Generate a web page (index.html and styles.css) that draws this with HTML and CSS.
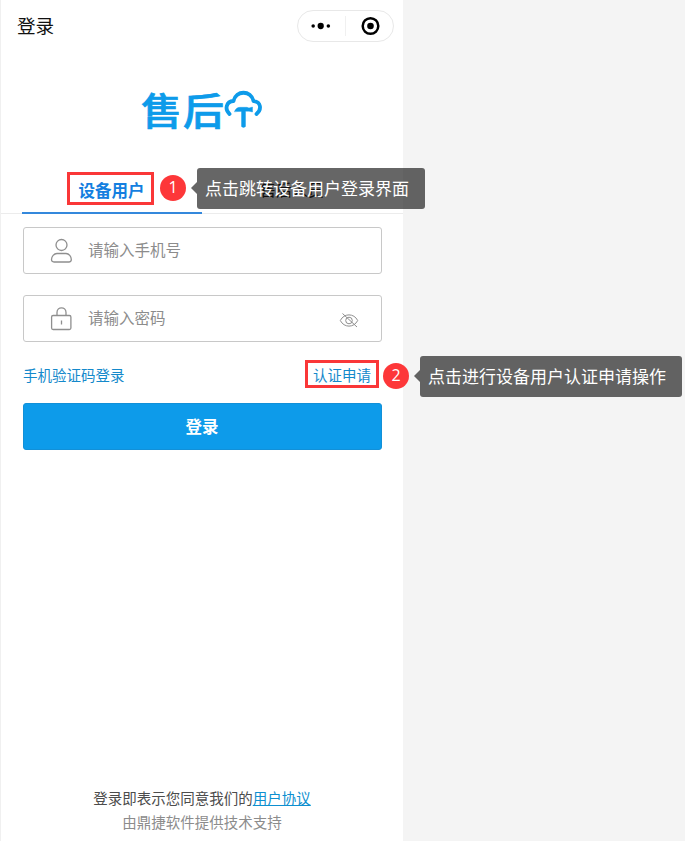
FILE: index.html
```
<!DOCTYPE html>
<html lang="zh-CN">
<head>
<meta charset="utf-8">
<title>登录</title>
<link rel="stylesheet" href="styles.css">
</head>
<body>
<main class="phone">
  <header class="navbar">
    <h1>登录</h1>
    <div class="capsule">
      <svg class="dots" viewBox="0 0 48 20"><circle cx="15.500" cy="10" r="1.800"/><circle cx="23.200" cy="10" r="3.200"/><circle cx="31" cy="10" r="1.800"/></svg>
      <svg class="target" viewBox="0 0 47 30"><circle class="ring" cx="24.500" cy="15" r="7.800"/><circle cx="24.500" cy="15" r="3.300"/></svg>
    </div>
  </header>

  <div class="logo">
    <span>售</span><span>后</span>
    <svg viewBox="0 0 40 40">
      <path d="M5.500 25 C.5 20.500 2 12.500 9.500 12 C12 1 27 1 29.500 12 C37 12.500 38 20.500 32.500 25"/>
      <path class="hammer" d="M10.500 22.500 C11.500 20 13 18.300 16 18.300 H23 L25 19 L28.500 18 V23 L25 22.200 H21.500 V37.500 Q19.500 39.500 17.500 37.500 V22.500 Z"/>
    </svg>
  </div>

  <nav class="tabs">
    <a class="tab active"><span>设备用户</span></a>
    <a class="tab"><span>售后人员</span></a>
    <div class="note note-user"><i class="badge">1</i><div class="tip">点击跳转设备用户登录界面</div></div>
  </nav>

  <form class="form">
    <div class="field">
      <svg class="icon" viewBox="0 0 24 26"><circle cx="12.500" cy="7" r="5.500"/><path d="M8 15.500 H17 C20 15.500 22.300 18.500 22.300 21.500 Q22.300 24 19.800 24 H5 Q2.500 24 2.500 21.500 C2.500 18.500 5 15.500 8 15.500 Z"/></svg>
      <span>请输入手机号</span>
    </div>
    <div class="field">
      <svg class="icon" viewBox="0 0 24 26"><rect x="2.600" y="9.500" width="19.300" height="14" rx="1.500"/><path d="M8 9.500 V6.500 C8 .2 17 .2 17 6.500 V9.500 M12.500 14.500 V18.500"/></svg>
      <span>请输入密码</span>
      <svg class="eye" viewBox="0 0 20 18"><path d="M1.300 9.500 C5 2 15 2 18.700 9.500 C15 17 5 17 1.300 9.500 Z M3.500 2.500 L18 16"/><circle cx="10" cy="9.500" r="3.300"/></svg>
    </div>
    <div class="links">
      <a>手机验证码登录</a>
      <a class="apply">认证申请</a>
      <div class="note note-apply"><i class="badge">2</i><div class="tip">点击进行设备用户认证申请操作</div></div>
    </div>
    <button type="button">登录</button>
  </form>

  <footer>
    <p>登录即表示您同意我们的<a>用户协议</a></p>
    <p class="support">由鼎捷软件提供技术支持</p>
  </footer>
</main>
</body>
</html>
```
FILE: styles.css
```
* { box-sizing: border-box; }
body {
  margin: 0;
  height: 841px;
  overflow: hidden;
  background: #f4f4f4;
  font-family: "Noto Sans CJK SC", sans-serif;
}
.phone {
  width: 403px;
  height: 841px;
  border-left: 1px solid #f0f0f0;
  background: #fff;
  display: flex;
  flex-direction: column;
}
.navbar {
  height: 50px;
  padding: 0 9px 0 16px;
  display: flex;
  align-items: center;
  justify-content: space-between;
}
h1 { margin: 0; font-size: 18.600px; font-weight: 400; line-height: 28px; color: #111; }
.capsule {
  width: 97px;
  height: 32px;
  margin-top: 1px;
  border: 1px solid #e8e8e8;
  border-radius: 16px;
  display: flex;
}
.capsule svg { fill: #000; }
.capsule .dots { width: 48px; height: 20px; margin: 5px 0; border-right: 1px solid #f0f0f0; }
.capsule .target { width: 47px; height: 30px; }
.capsule .ring { fill: none; stroke: #000; stroke-width: 2.500; }

.logo {
  height: 44px;
  margin: 39px 0 0 140px;
  display: flex;
  color: #0d9bea;
}
.logo span {
  width: 43px;
  font-size: 41px;
  line-height: 42px;
  font-weight: 500;
  -webkit-text-stroke: .8px currentColor;
  stroke-linejoin: round;
  transform: scaleY(.92);
  transform-origin: 0 0;
}
.logo svg {
  width: 40px;
  height: 40px;
  margin: 0 0 0 -1px;
  fill: none;
  stroke: currentColor;
  stroke-width: 3.800;
  stroke-linecap: round;
  stroke-linejoin: round;
}
.logo .hammer { fill: currentColor; stroke-width: .4; }
.logo span + span { width: 42px; margin-left: -1px; }

.tabs {
  position: relative;
  height: 48px;
  margin-top: 33px;
  padding: 0 21px;
  display: flex;
  border-bottom: 1px solid #ececec;
}
.tab {
  width: 180px;
  height: 48px;
  padding-top: 6px;
  display: flex;
  justify-content: center;
  font-size: 16px;
  color: #222;
}
.tab span { height: 33px; line-height: 35px; }
.tab.active { border-bottom: 2px solid #3488dc; color: #147fe0; }
.active span {
  width: 87px;
  margin-left: -3px;
  padding-left: 2px;
  border: 3px solid #fa3738;
  font-size: 16.500px;
  font-weight: 700;
  line-height: 30px;
  text-align: center;
}

.note { position: absolute; display: flex; align-items: center; gap: 11px; }
.note-user { left: 159px; top: 2px; }
.note-apply { left: 360px; top: -4px; }
.badge {
  width: 26px;
  height: 26px;
  margin-top: -1px;
  border-radius: 50%;
  background: #fd3739;
  color: #fff;
  font: 16px/24px "Open Sans", sans-serif;
  text-align: center;
}
.tip {
  position: relative;
  height: 41px;
  padding: 0 16px 0 8px;
  border-radius: 3px;
  background: rgba(0, 0, 0, .6);
  color: #fff;
  font-size: 17px;
  line-height: 40px;
  white-space: nowrap;
}
.tip::before {
  content: "";
  position: absolute;
  left: -6px;
  top: 14px;
  border: 6px solid transparent;
  border-left: 0;
  border-right-color: rgba(0, 0, 0, .6);
}

.form { padding: 13px 22px 0; }
.field {
  width: 359px;
  height: 47px;
  margin-bottom: 21px;
  padding: 0 22px 0 25px;
  display: flex;
  align-items: center;
  border: 1px solid #c8c8c8;
  border-radius: 3px;
  color: #8c8c8c;
  font-size: 15.500px;
}
.field span { margin-top: -3px; }
.field svg { fill: none; stroke: #8f8f8f; }
.icon { width: 24px; height: 26px; margin-right: 15px; stroke-width: 1.300; }
.eye { width: 20px; height: 18px; margin: 3px 0 0 auto; stroke-width: 1; }
.links {
  position: relative;
  height: 28px;
  margin-top: -3px;
  display: flex;
  justify-content: space-between;
  color: #1489cb;
  font-size: 14.500px;
  line-height: 29px;
}
.apply {
  width: 74px;
  height: 28px;
  margin-right: 2px;
  border: 3px solid #fa3738;
  line-height: 23px;
  text-align: center;
}
button {
  display: block;
  width: 359px;
  height: 47px;
  margin-top: 15px;
  padding: 0 1px 0 0;
  border: 1px solid #1290d8;
  border-radius: 3px;
  background: #0d9bea;
  color: #fff;
  font: 700 16.500px/45px "Noto Sans CJK SC", sans-serif;
}

footer {
  margin: auto 0 7px;
  text-align: center;
  font-size: 14.500px;
  line-height: 24px;
  color: #4c4c4c;
}
p { margin: 0; }
footer a { color: #0d8fd0; text-decoration: underline; }
.support { color: #8c8c8c; }
```
